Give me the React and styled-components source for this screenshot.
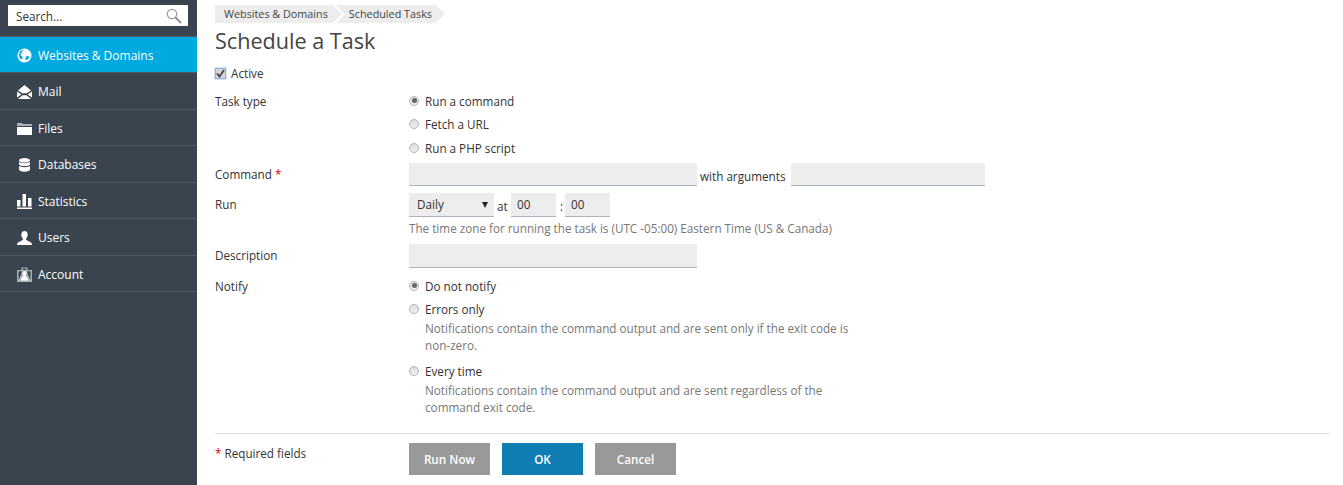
import React from "react";
import styled, { createGlobalStyle } from "styled-components";

const GlobalStyle = createGlobalStyle`
  html, body { margin: 0; padding: 0; height: 100%; background: #fff; overflow: hidden; }
  body { font-family: "Open Sans", sans-serif; font-size: 11.7px; color: #333; }
`;

const GlobeIcon = () => (
  <svg width="15" height="15" viewBox="0 0 15 15">
    <circle cx="7.5" cy="7.5" r="7" fill="#fff" />
    <path d="M2.500 4.500C3.500 2.800 5 2 6.500 1.800c-.3 1-1.700 1.200-1.700 2.500 0 1.200-1.300 1-1.300 2.200 0 1 1.200 1.500 2 2.500.3.600-.2 2.500-.8 2.500C3 10.500 2.200 9.500 2 8z" fill="#00a9e0" />
    <path d="M9 8.500c1.300-.4 2.700-.4 3.800 0-.5 1.800-1.800 3-3.500 3.500-.8.200-1.200-.400-.8-1.200.3-.7 0-1.800.5-2.300z" fill="#00a9e0" />
  </svg>
);

const MailIcon = () => (
  <svg width="15" height="14" viewBox="0 0 15 14">
    <path d="M7.500 0 14 5.500 9.800 8.200H5.200L1 5.500z" fill="#fff" />
    <path d="M0 6.500 4.500 9.500 0 12.500zM15 6.500 10.500 9.500 15 12.500zM1 14l4.500-3.800h4L14 14z" fill="#fff" />
  </svg>
);

const FolderIcon = () => (
  <svg width="15" height="13" viewBox="0 0 15 13">
    <path d="M0 1h5l1 1h9v2H0z" fill="#aab2b9" />
    <path d="M0 5h15v8H0z" fill="#fff" />
  </svg>
);

const DatabaseIcon = () => (
  <svg width="13" height="14" viewBox="0 0 13 14">
    <ellipse cx="6.500" cy="2.300" rx="5.500" ry="2.300" fill="#fff" />
    <path d="M1 4c1.500 1.500 9.500 1.500 11 0v2.500c-1 2-10 2-11 0zM1 8c1.500 1.500 9.500 1.500 11 0v3.500c-1 3-10 3-11 0z" fill="#fff" />
  </svg>
);

const ChartIcon = () => (
  <svg width="15" height="15" viewBox="0 0 15 15">
    <path d="M0 6h3.500v6.500H0zM5.500 0H9v12.500H5.500zM11 4h3.500v8.500H11zM0 13.500h15V15H0z" fill="#fff" />
  </svg>
);

const UserIcon = () => (
  <svg width="15" height="14" viewBox="0 0 15 14">
    <path d="M7.500 0c2 0 3.200 1.500 3.200 3.800 0 1.700-.8 3.200-1.700 4 .2 1.500 1 1.800 3 2.700 1.500.6 3 1 3 3.500H0c0-2.500 1.500-2.900 3-3.500 2-.9 2.800-1.200 3-2.700-.9-.8-1.700-2.300-1.700-4C4.300 1.500 5.500 0 7.500 0z" fill="#fff" />
  </svg>
);

const AccountIcon = () => (
  <svg width="15" height="15" viewBox="0 0 15 15">
    <path d="M0 3h4.500V0.500h6V3H15v12H0z" fill="#aab2b9" />
    <path d="M6 1.500h3V3H6zM1.500 4.500 4.500 4v2.500L1.500 13zM13.500 4.500 10.500 4v2.500L13.500 13z" fill="#39444f" />
    <path d="M7.500 4c1.300 0 2 1 2 2.300 0 1-.5 1.800-1 2.200 0 .8.600 1 1.500 1.500l1.500 3.500H3.500L5 10c.9-.5 1.500-.7 1.500-1.500-.5-.4-1-1.200-1-2.200C5.500 5 6.200 4 7.500 4z" fill="#fff" />
  </svg>
);

const SearchIcon = () => (
  <svg width="16" height="16" viewBox="0 0 16 16" fill="none">
    <circle cx="6" cy="6" r="4.700" stroke="#9a9a9a" strokeWidth="1.200" />
    <path d="M9.500 9.500l5.500 5.500" stroke="#8a8a8a" strokeWidth="1.800" />
  </svg>
);

const NAV_ITEMS = [
  { label: "Websites & Domains", icon: GlobeIcon, active: true },
  { label: "Mail", icon: MailIcon },
  { label: "Files", icon: FolderIcon },
  { label: "Databases", icon: DatabaseIcon },
  { label: "Statistics", icon: ChartIcon },
  { label: "Users", icon: UserIcon },
  { label: "Account", icon: AccountIcon },
];

const App = () => (
  <Page>
    <GlobalStyle />
    <Sidebar>
      <SearchBar>
        <SearchBox>
          <SearchText>Search...</SearchText>
          <SearchIcon />
        </SearchBox>
      </SearchBar>
      <nav>
        {NAV_ITEMS.map(({ label, icon: NavIcon, active }) => (
          <NavItem key={label} $active={active}>
            <NavGlyph>
              <NavIcon />
            </NavGlyph>
            {label}
          </NavItem>
        ))}
      </nav>
    </Sidebar>

    <Main>
      <Breadcrumbs>
        <Crumb>Websites &amp; Domains</Crumb>
        <Crumb $second>Scheduled Tasks</Crumb>
      </Breadcrumbs>
      <Title>Schedule a Task</Title>

      <ActiveRow>
        <CheckBox>
          <svg width="9" height="9" viewBox="0 0 9 9">
            <path d="M1 4.500 3.500 7.500 8 1" fill="none" stroke="#444" strokeWidth="1.800" />
          </svg>
        </CheckBox>
        Active
      </ActiveRow>

      <Field $top={11}>
        <Label>Task type</Label>
        <div>
          <RadioRow>
            <Radio $checked />
            Run a command
          </RadioRow>
          <RadioRow $top={6}>
            <Radio />
            Fetch a URL
          </RadioRow>
          <RadioRow $top={7}>
            <Radio />
            Run a PHP script
          </RadioRow>
        </div>
      </Field>

      <Field $top={6}>
        <Label $pad={3}>
          Command <Star>*</Star>
        </Label>
        <InlineControls>
          <TextBox $width={288} />
          <Word $width={94} $left={3}>with arguments</Word>
          <TextBox $width={194} />
        </InlineControls>
      </Field>

      <Field $top={7}>
        <Label $pad={3}>Run</Label>
        <div>
          <InlineControls>
            <SelectBox>
              Daily
              <Caret />
            </SelectBox>
            <Word $width={17} $left={3}>at</Word>
            <TextBox $width={45} $height={24}>00</TextBox>
            <Word $width={9} $left={4}>:</Word>
            <TextBox $width={45} $height={24}>00</TextBox>
          </InlineControls>
          <Hint $top={3}>
            The time zone for running the task is (UTC -05:00) Eastern Time (US &amp; Canada)
          </Hint>
        </div>
      </Field>

      <Field $top={7}>
        <Label $pad={3}>Description</Label>
        <TextBox $width={288} $height={24} />
      </Field>

      <Field $top={10}>
        <Label>Notify</Label>
        <div>
          <RadioRow>
            <Radio $checked />
            Do not notify
          </RadioRow>
          <RadioRow $top={6}>
            <Radio />
            Errors only
          </RadioRow>
          <Hint $indent $top={2}>
            Notifications contain the command output and are sent only if the exit code is non-zero.
          </Hint>
          <RadioRow $top={9}>
            <Radio />
            Every time
          </RadioRow>
          <Hint $indent $top={2}>
            Notifications contain the command output and are sent regardless of the command exit code.
          </Hint>
        </div>
      </Field>

      <Footer>
        <Label $pad={2}>
          <Star>*</Star> Required fields
        </Label>
        <Buttons>
          <Button>Run Now</Button>
          <Button $primary>OK</Button>
          <Button>Cancel</Button>
        </Buttons>
      </Footer>
    </Main>
  </Page>
);

export default App;

const Page = styled.div`
  display: flex;
  width: 1343px;
  height: 485px;
  overflow: hidden;
`;

const Sidebar = styled.aside`
  flex: 0 0 197px;
  background: #39444f;
`;

const SearchBar = styled.div`
  height: 36.500px;
  padding: 5px 9px 0 8px;
  box-sizing: border-box;
  border-bottom: 1px solid #4c5863;
`;

const SearchBox = styled.div`
  display: flex;
  align-items: center;
  justify-content: space-between;
  height: 21px;
  padding: 0 6px 0 8px;
  background: #fff;
`;

const SearchText = styled.span`
  color: #333;
  font-size: 11.700px;
`;

const NavItem = styled.div`
  display: flex;
  align-items: center;
  height: 36.500px;
  box-sizing: border-box;
  padding: 2px 0 0 17px;
  color: #fff;
  font-size: 12px;
  background: ${({ $active }) => ($active ? "#00a9e0" : "transparent")};
  border-bottom: 1px solid #4c5863;
`;

const NavGlyph = styled.span`
  display: flex;
  align-items: center;
  justify-content: center;
  width: 15px;
  margin-right: 6px;
`;

const Main = styled.main`
  flex: 1;
  padding: 5px 13px 0 18px;
  min-width: 0;
`;

const Breadcrumbs = styled.div`
  display: flex;
  height: 18px;
`;

const Crumb = styled.span`
  display: flex;
  align-items: center;
  height: 18px;
  box-sizing: border-box;
  padding: 0 ${({ $second }) => ($second ? "13px" : "14px")} 1px ${({ $second }) => ($second ? "13px" : "9px")};
  margin-right: ${({ $second }) => ($second ? "0" : "-6px")};
  background: #ededed;
  font-size: 10.800px;
  color: #444;
  clip-path: ${({ $second }) =>
    $second
      ? "polygon(0 0, calc(100% - 9px) 0, 100% 50%, calc(100% - 9px) 100%, 0 100%, 9px 50%)"
      : "polygon(0 0, calc(100% - 9px) 0, 100% 50%, calc(100% - 9px) 100%, 0 100%)"};
`;

const Title = styled.h1`
  margin: 3px 0 0;
  font-size: 21.600px;
  line-height: 30px;
  font-weight: 400;
  color: #444;
`;

const ActiveRow = styled.div`
  display: flex;
  align-items: center;
  gap: 5px;
  margin-top: 8px;
  height: 18px;
`;

const CheckBox = styled.span`
  display: flex;
  align-items: center;
  justify-content: center;
  width: 9px;
  height: 9px;
  background: #d5d5d5;
  border: 1px solid #8fb0e8;
  box-shadow: 0 0 0 0.500px #b5ccf2;
`;

const Field = styled.div`
  display: grid;
  grid-template-columns: 194px 1fr;
  margin-top: ${({ $top }) => $top || 0}px;
`;

const Label = styled.div`
  line-height: 17px;
  padding-top: ${({ $pad }) => $pad || 0}px;
`;

const Star = styled.span`
  color: #e00000;
`;

const RadioRow = styled.div`
  display: flex;
  align-items: center;
  box-sizing: border-box;
  height: 17px;
  padding-bottom: 2px;
  margin-top: ${({ $top }) => $top || 0}px;
`;

const Radio = styled.span`
  position: relative;
  flex: none;
  width: 8px;
  height: 8px;
  margin-right: 6px;
  border-radius: 50%;
  border: 1px solid #b4b4b4;
  background: linear-gradient(#dcdcdc, #f2f2f2);

  &::after {
    content: "";
    display: ${({ $checked }) => ($checked ? "block" : "none")};
    position: absolute;
    inset: 1.500px;
    border-radius: 50%;
    background: #666;
  }
`;

const InlineControls = styled.div`
  display: flex;
  align-items: flex-start;
`;

const TextBox = styled.div`
  box-sizing: border-box;
  flex: none;
  width: ${({ $width }) => $width}px;
  height: ${({ $height }) => $height || 23}px;
  padding-left: 6px;
  line-height: 22px;
  background: #ededed;
  border-bottom: 1px solid #acb3ba;
  color: #333;
`;

const SelectBox = styled(TextBox).attrs({ $width: 85, $height: 24 })`
  position: relative;
  padding-left: 8px;
`;

const Caret = styled.span`
  position: absolute;
  right: 6px;
  top: 9px;
  width: 0;
  height: 0;
  border-left: 3.500px solid transparent;
  border-right: 3.500px solid transparent;
  border-top: 6px solid #222;
`;

const Word = styled.span`
  box-sizing: border-box;
  flex: none;
  width: ${({ $width }) => $width}px;
  padding: 5px 0 0 ${({ $left }) => $left}px;
  line-height: 17px;
  white-space: nowrap;
`;

const Hint = styled.div`
  box-sizing: border-box;
  width: ${({ $indent }) => ($indent ? "446px" : "auto")};
  margin-top: ${({ $top }) => $top || 0}px;
  padding-left: ${({ $indent }) => ($indent ? "16px" : "0")};
  line-height: 17px;
  color: #777;
`;

const Footer = styled.div`
  display: grid;
  grid-template-columns: 194px 1fr;
  margin-top: 17px;
  padding-top: 9px;
  border-top: 1px solid #dcdcdc;
`;

const Buttons = styled.div`
  display: flex;
  gap: 12px;
`;

const Button = styled.div`
  display: flex;
  align-items: center;
  justify-content: center;
  width: 81px;
  height: 32px;
  background: ${({ $primary }) => ($primary ? "#0f7db1" : "#999")};
  color: #fff;
  font-weight: 600;
`;
